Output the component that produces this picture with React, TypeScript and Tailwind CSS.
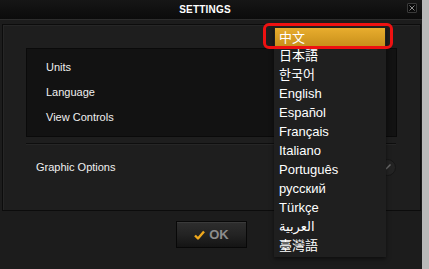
import React from "react";

const FONT = {
  fontFamily:
    '"Liberation Sans", Arial, "Noto Sans CJK SC", "Noto Sans CJK JP", "Noto Sans CJK KR", "DejaVu Sans", sans-serif',
};

const langs: { label: string; font?: string }[] = [
  { label: "日本語", font: '"Liberation Sans", "Noto Sans CJK JP", sans-serif' },
  { label: "한국어", font: '"Liberation Sans", "Noto Sans CJK KR", sans-serif' },
  { label: "English" },
  { label: "Español" },
  { label: "Français" },
  { label: "Italiano" },
  { label: "Português" },
  { label: "русский" },
  { label: "Türkçe" },
  { label: "العربية", font: '"DejaVu Sans", "Noto Sans", sans-serif' },
  { label: "臺灣語", font: '"Liberation Sans", "Noto Sans CJK TC", sans-serif' },
];

export default function App() {
  return (
    <div className="w-[429px] h-[269px] flex bg-[#b9b9b9] overflow-hidden" style={FONT}>
      <div className="relative w-[422px] h-[269px] flex flex-col bg-[#1c1c1c]">
        {/* Title bar */}
        <div className="relative h-[20px] flex items-center justify-center bg-gradient-to-b from-[#161616] to-[#0b0b0b] border-b border-[#2c2c2c]">
          <span className="text-[10px] font-bold text-white tracking-[0.2px] -ml-[12px]">SETTINGS</span>
          <div className="absolute right-[5px] top-[3px] w-[10px] h-[10px] border border-[#3a3a3a] bg-[#0a0a0a] rounded-[1px] flex items-center justify-center">
            <svg width="8" height="8" viewBox="0 0 8 8">
              <path d="M1.5 1.5 L6.5 6.5 M6.5 1.5 L1.5 6.5" stroke="#8a8a8a" strokeWidth="1" />
            </svg>
          </div>
        </div>

        {/* Body */}
        <div className="ml-[2px] mt-[4px] w-[419px] h-[187px] border border-[#0c0c0c] bg-[#1e1e1e] shadow-[inset_1px_1px_0_#262626]">
          <div className="ml-[23px] mt-[23px] w-[371px] h-[89px] bg-[#121212] border border-[#0a0a0a] flex flex-col pl-[19px] pt-[11px] gap-[10px]">
            <div className="h-[15px] leading-[15px] text-[11px] text-[#f0f0f0]">Units</div>
            <div className="h-[15px] leading-[15px] text-[11px] text-[#f0f0f0]">Language</div>
            <div className="h-[15px] leading-[15px] text-[11px] text-[#f0f0f0]">View Controls</div>
          </div>
          <div className="ml-[23px] mt-[6px] w-[370px] h-[2px] bg-[#0e0e0e] border-b border-[#262626]" />
          <div className="ml-[23px] mt-[13px] w-[370px] h-[18px] flex items-center justify-between pl-[10px]">
            <span className="text-[11px] text-[#f0f0f0]">Graphic Options</span>
            <div className="w-[17px] h-[17px] rounded-full bg-[#232323] border border-[#161616] flex items-center justify-center">
              <svg width="8" height="8" viewBox="0 0 8 8">
                <path d="M1 7 L2 5 L6 1 L7 2 L3 6 Z" fill="#6a6a6a" />
              </svg>
            </div>
          </div>
        </div>

        {/* OK button */}
        <div className="flex justify-center mt-[10px]">
          <div className="ml-[1px] w-[71px] h-[27px] border border-[#080808] bg-gradient-to-b from-[#2e2e2e] via-[#232323] to-[#141414] flex items-center justify-center gap-[4px] shadow-[inset_0_1px_0_#3a3a3a]">
            <svg width="11" height="10" viewBox="0 0 11 10">
              <path d="M1 5.5 L4 8.5 L10 1.5" stroke="#f0a81c" strokeWidth="2.4" fill="none" strokeLinejoin="round" />
            </svg>
            <span className="text-[13px] font-bold text-[#8c8c8c]">OK</span>
          </div>
        </div>

        {/* Dropdown */}
        <div className="absolute left-[274px] top-[26px] w-[112px] h-[231px] bg-[#1f1f1f] shadow-[0_2px_4px_rgba(0,0,0,0.5)] flex flex-col pt-[2px]">
          <div className="mx-[1px] h-[18px] bg-gradient-to-b from-[#e8ad2e] to-[#c9901a] flex items-center pl-[4px] text-[13px] text-white leading-none" style={{ fontFamily: '"Liberation Sans", "Noto Sans CJK SC", sans-serif' }}>
            中文
          </div>
          {langs.map((l) => (
            <div
              key={l.label}
              className="h-[19px] flex items-center pl-[5px] text-[13px] text-white leading-none"
              style={l.font ? { fontFamily: l.font } : undefined}
            >
              {l.label}
            </div>
          ))}
        </div>

        {/* Red annotation */}
        <div className="absolute left-[263px] top-[23px] w-[130px] h-[26px] border-[3px] border-[#ee1111] rounded-[6px]" />
      </div>
    </div>
  );
}
